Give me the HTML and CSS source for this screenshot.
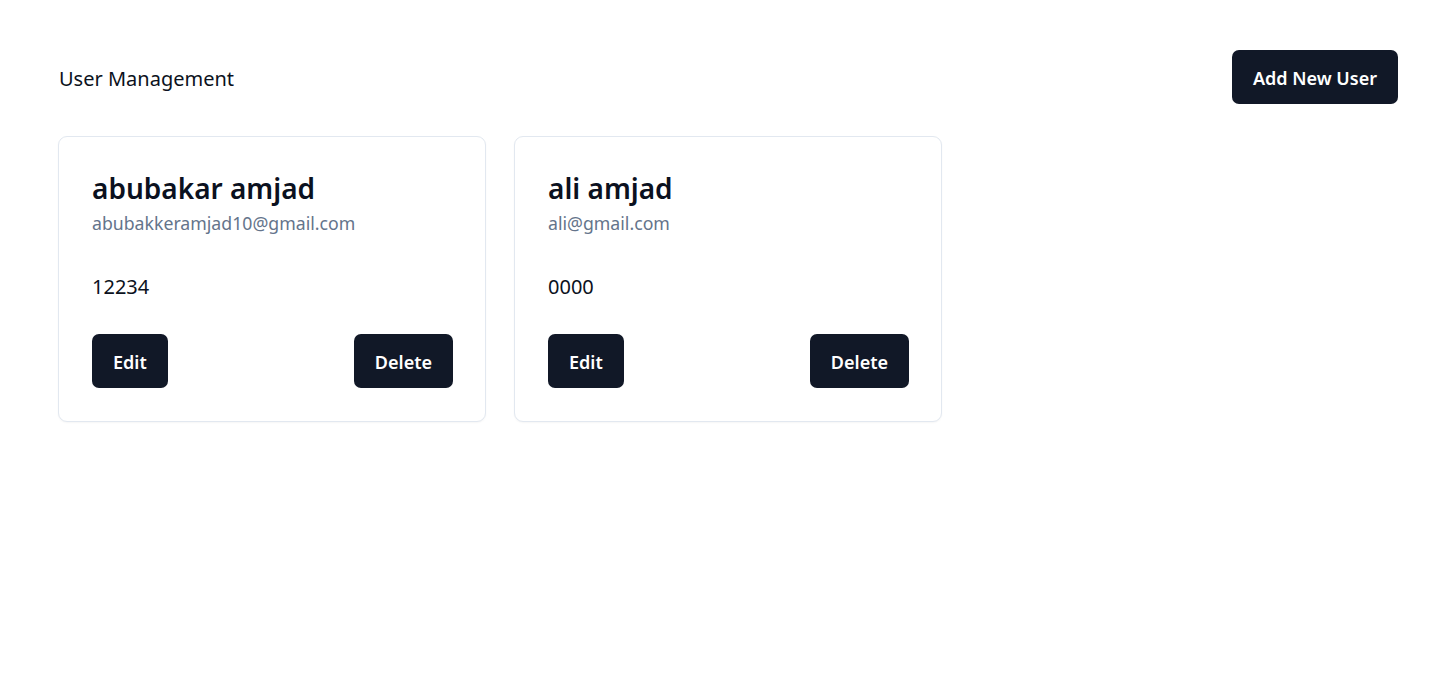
FILE: index.html
```html
<!DOCTYPE html>
<html lang="en">
<head>
<meta charset="utf-8">
<title>User Management</title>
<link rel="stylesheet" href="styles.css">
</head>
<body>
<div class="page">
  <header class="header">
    <h1 class="title">User Management</h1>
    <button class="btn btn-lg">Add New User</button>
  </header>
  <div class="grid">
    <div class="card">
      <h2 class="name">abubakar amjad</h2>
      <p class="email">abubakkeramjad10@gmail.com</p>
      <p class="phone">12234</p>
      <div class="actions">
        <button class="btn">Edit</button>
        <button class="btn">Delete</button>
      </div>
    </div>
    <div class="card">
      <h2 class="name">ali amjad</h2>
      <p class="email">ali@gmail.com</p>
      <p class="phone">0000</p>
      <div class="actions">
        <button class="btn">Edit</button>
        <button class="btn">Delete</button>
      </div>
    </div>
  </div>
</div>
</body>
</html>
```

FILE: styles.css
```css
* { box-sizing: border-box; }
html, body { margin: 0; padding: 0; background: #fff; }
body {
  font-family: "Noto Sans", "Open Sans", sans-serif;
  color: #0b1120;
}
.page {
  padding: 50px 57px 40px 58px;
}
.header {
  display: flex;
  align-items: center;
  justify-content: space-between;
  height: 54px;
}
.title {
  margin: 2px 0 0 0;
  font-size: 20px;
  font-weight: 400;
  padding-left: 1px;
  color: #0b1120;
}
.btn {
  font-family: inherit;
  background: #111827;
  color: #fff;
  border: none;
  border-radius: 7px;
  height: 54px;
  padding: 2px 21px 0 21px;
  font-size: 18px;
  font-weight: 600;
  cursor: pointer;
}
.grid {
  margin-top: 32px;
  display: grid;
  grid-template-columns: repeat(3, 1fr);
  gap: 28px;
}
.card {
  border: 1px solid #e2e8f0;
  border-radius: 9px;
  padding: 32px 32px 33px 33px;
  box-shadow: 0 1px 2px rgba(0,0,0,0.04);
  background: #fff;
}
.name {
  margin: 0;
  font-size: 28px;
  font-weight: 600;
  line-height: 38px;
  color: #0b1120;
}
.email {
  margin: 3px 0 0 0;
  font-size: 17.7px;
  line-height: 26px;
  color: #64748b;
}
.phone {
  margin: 38px 0 0 0;
  font-size: 20px;
  line-height: 26px;
  color: #0b1120;
}
.actions {
  margin-top: 34px;
  display: flex;
  justify-content: space-between;
}
```
